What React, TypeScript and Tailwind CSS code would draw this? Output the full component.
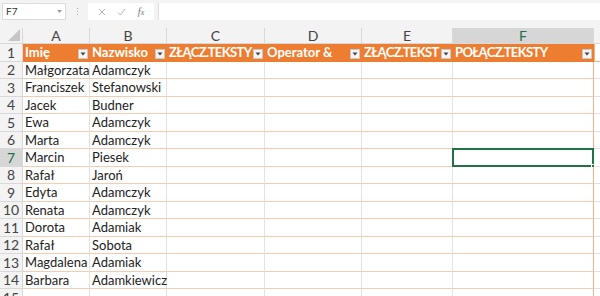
import React from 'react';

const cols = [
  { key: 'A', w: 'w-[67px]' },
  { key: 'B', w: 'w-[77px]' },
  { key: 'C', w: 'w-[98px]' },
  { key: 'D', w: 'w-[97px]' },
  { key: 'E', w: 'w-[91px]' },
  { key: 'F', w: 'w-[141px]' },
];

// caps headers get squeezed a bit, Calibri caps are narrow
const headers = [
  { text: 'Imię', caps: false },
  { text: 'Nazwisko', caps: false },
  { text: 'ZŁĄCZ.TEKSTY', caps: true },
  { text: 'Operator &', caps: false },
  { text: 'ZŁĄCZ.TEKST', caps: true },
  { text: 'POŁĄCZ.TEKSTY', caps: true },
];

const people: [string, string][] = [
  ['Małgorzata', 'Adamczyk'],
  ['Franciszek', 'Stefanowski'],
  ['Jacek', 'Budner'],
  ['Ewa', 'Adamczyk'],
  ['Marta', 'Adamczyk'],
  ['Marcin', 'Piesek'],
  ['Rafał', 'Jaroń'],
  ['Edyta', 'Adamczyk'],
  ['Renata', 'Adamczyk'],
  ['Dorota', 'Adamiak'],
  ['Rafał', 'Sobota'],
  ['Magdalena', 'Adamiak'],
  ['Barbara', 'Adamkiewicz'],
  ['', ''],
];

const FilterBtn = () => (
  <span className="absolute right-[2px] top-[5px] w-[10px] h-[10px] bg-[#f4f4f4] border border-[#c8c8c8] flex items-center justify-center">
    <svg width="6" height="4" viewBox="0 0 6 4">
      <path d="M0.5 0.5 L5.5 0.5 L3 3.5 Z" fill="#444" />
    </svg>
  </span>
);

export default function App() {
  return (
    <div className="w-[600px] h-[296px] overflow-hidden bg-white text-[#222]" style={{ fontFamily: 'Lato, "Open Sans", sans-serif' }}>
      {/* formula bar */}
      <div className="h-[28px] bg-[#f3f3f3] flex items-start pt-[3px] pl-[2px] gap-[4px]">
        <div className="w-[64px] h-[17px] bg-white border border-[#dcdcdc] flex items-center justify-between pl-[3px] pr-[3px]">
          <span className="text-[10px] text-[#333]">F7</span>
          <svg width="5" height="3" viewBox="0 0 5 3"><path d="M0 0 L5 0 L2.5 3 Z" fill="#999" /></svg>
        </div>
        <div className="w-[14px] h-[17px] flex flex-col items-center justify-center gap-[2px]">
          <span className="w-[1px] h-[1px] bg-[#aaa]" />
          <span className="w-[1px] h-[1px] bg-[#aaa]" />
          <span className="w-[1px] h-[1px] bg-[#aaa]" />
        </div>
        <div className="w-[66px] h-[17px] bg-white flex items-center justify-around px-[4px]">
          <svg width="8" height="8" viewBox="0 0 8 8"><path d="M1 1 L7 7 M7 1 L1 7" stroke="#b5b5b5" strokeWidth="1" /></svg>
          <svg width="9" height="8" viewBox="0 0 9 8"><path d="M1 4.5 L3.5 7 L8 1" stroke="#b5b5b5" strokeWidth="1" fill="none" /></svg>
          <span className="text-[10px] italic text-[#777]" style={{ fontFamily: '"Liberation Serif", serif' }}>f<span className="text-[8px]">x</span></span>
        </div>
        <div className="flex-1 h-[17px] bg-white border-l border-[#dcdcdc]" />
      </div>

      {/* column headers */}
      <div className="flex h-[16px] bg-[#f3f3f3] border-b border-[#d8d8d8]">
        <div className="w-[23px] relative border-r border-[#d8d8d8]">
          <svg className="absolute right-[2px] bottom-[2px]" width="12" height="12" viewBox="0 0 12 12"><path d="M12 0 L12 12 L0 12 Z" fill="#c6c6c6" /></svg>
        </div>
        {cols.map((c) => (
          <div
            key={c.key}
            className={`${c.w} flex items-center justify-center text-[14px] border-r border-[#d8d8d8] ${c.key === 'F' ? 'bg-[#d6d6d6] text-[#217346]' : 'text-[#444]'}`}
          >
            {c.key}
          </div>
        ))}
        <div className="flex-1" />
      </div>

      {/* row 1 - table header */}
      <div className="flex h-[17.5px]">
        <div className="w-[23px] bg-[#f3f3f3] border-r border-b border-[#d8d8d8] flex items-center justify-center text-[14px] text-[#444]">1</div>
        {cols.map((c, i) => (
          <div
            key={c.key}
            className={`${c.w} relative bg-[#ed7d31] text-white font-bold leading-[17px] pl-[2px] whitespace-nowrap overflow-hidden ${headers[i].caps ? 'text-[13px] tracking-[-0.6px]' : 'text-[13px]'}`}
          >
            {headers[i].text}
            <FilterBtn />
          </div>
        ))}
        <div className="flex-1 border-b border-[#e2e2e2] border-l border-[#f4b183]" />
      </div>

      {people.map(([first, last], idx) => {
        const rowNum = idx + 2;
        const selected = rowNum === 7;
        return (
          <div key={rowNum} className="flex h-[17.5px]">
            <div className={`w-[23px] border-r border-b border-[#d8d8d8] flex items-center justify-center text-[14px] ${selected ? 'bg-[#d6d6d6] text-[#217346]' : 'bg-[#f3f3f3] text-[#444]'}`}>
              {rowNum}
            </div>
            {cols.map((c, i) => (
              <div
                key={c.key}
                className={`${c.w} relative text-[13px] leading-[17px] pl-[2px] whitespace-nowrap border-b ${rowNum === 15 ? 'border-[#e2e2e2]' : 'border-[#f8cbad]'} ${i < 5 ? 'border-r border-r-[#e2e2e2]' : 'border-r border-r-[#f4b183]'}`}
              >
                {i === 0 ? first : i === 1 ? last : ''}
                {selected && c.key === 'F' && (
                  <span className="absolute -left-[1px] -top-[1px] right-[-1px] bottom-[-1px] border-2 border-[#217346]">
                    <span className="absolute -right-[3px] -bottom-[3px] w-[4px] h-[4px] bg-[#217346] border border-white" />
                  </span>
                )}
              </div>
            ))}
            <div className="flex-1 border-b border-[#e2e2e2]" />
          </div>
        );
      })}
    </div>
  );
}
